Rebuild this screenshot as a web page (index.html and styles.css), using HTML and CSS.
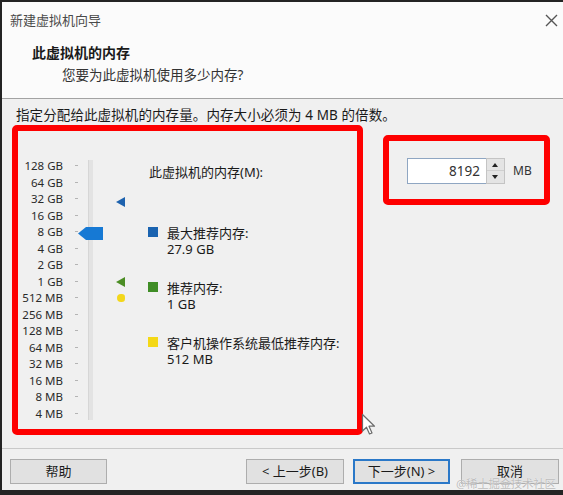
FILE: index.html
```html
<!DOCTYPE html>
<html lang="zh-CN">

<head>
    <meta charset="UTF-8">
    <meta name="viewport" content="width=device-width, initial-scale=1.0">
    <title>新建虚拟机向导</title>
    <link rel="stylesheet" href="styles.css">
</head>

<body>
    <div class="window">
        <div class="titlebar">
            <span class="title">新建虚拟机向导</span>
            <svg class="close" width="13" height="13" viewBox="0 0 13 13">
                <path d="M1 1L12 12M12 1L1 12" stroke="#555" stroke-width="1.4" fill="none" />
            </svg>
        </div>
        <div class="header">
            <h1>此虚拟机的内存</h1>
            <p>您要为此虚拟机使用多少内存?</p>
        </div>
        <div class="content">
            <p class="hint">指定分配给此虚拟机的内存量。内存大小必须为 4 MB 的倍数。</p>
            <div class="panels">
                <div class="highlight scaleBox">
                    <div class="scale">
                        <div class="rows">
                            <div class="row"><span>128 GB</span><i></i></div>
                            <div class="row"><span>64 GB</span><i></i></div>
                            <div class="row"><span>32 GB</span><i></i></div>
                            <div class="row"><span>16 GB</span><i></i></div>
                            <div class="row"><span>8 GB</span><i></i></div>
                            <div class="row"><span>4 GB</span><i></i></div>
                            <div class="row"><span>2 GB</span><i></i></div>
                            <div class="row"><span>1 GB</span><i></i></div>
                            <div class="row"><span>512 MB</span><i></i></div>
                            <div class="row"><span>256 MB</span><i></i></div>
                            <div class="row"><span>128 MB</span><i></i></div>
                            <div class="row"><span>64 MB</span><i></i></div>
                            <div class="row"><span>32 MB</span><i></i></div>
                            <div class="row"><span>16 MB</span><i></i></div>
                            <div class="row"><span>8 MB</span><i></i></div>
                            <div class="row"><span>4 MB</span><i></i></div>
                        </div>
                        <div class="track">
                            <div class="thumb" style="top: 67px"></div>
                        </div>
                        <div class="marks">
                            <span class="mark maxMark" style="top: 39px"></span>
                            <span class="mark recMark" style="top: 119px"></span>
                            <span class="mark minMark" style="top: 136px"></span>
                        </div>
                    </div>
                    <div class="legend">
                        <div class="legendTitle">此虚拟机的内存(M):</div>
                        <div class="legendItem">
                            <span class="swatch maxSwatch"></span>
                            <div>最大推荐内存:<br>27.9 GB</div>
                        </div>
                        <div class="legendItem">
                            <span class="swatch recSwatch"></span>
                            <div>推荐内存:<br>1 GB</div>
                        </div>
                        <div class="legendItem">
                            <span class="swatch minSwatch"></span>
                            <div>客户机操作系统最低推荐内存:<br>512 MB</div>
                        </div>
                    </div>
                </div>
                <div class="highlight inputBox">
                    <div class="spin">
                        <input type="text" value="8192">
                        <div class="spinButtons">
                            <button class="up"></button>
                            <button class="down"></button>
                        </div>
                    </div>
                    <span class="unit">MB</span>
                </div>
            </div>
        </div>
        <div class="footer">
            <button class="btn">帮助</button>
            <span class="spacer"></span>
            <button class="btn back">&lt; 上一步(B)</button>
            <button class="btn primary">下一步(N) &gt;</button>
            <button class="btn cancel">取消</button>
        </div>
    </div>
    <svg class="cursor" width="16" height="24" viewBox="0 0 16 24">
        <path d="M1.5 1.5L1.5 18L5.5 14.2L8.5 21L11 20L8 13.2L13.5 13.2Z" fill="#fff" stroke="#6b6b6b"
            stroke-width="1.2" stroke-linejoin="round" />
    </svg>
    <div class="watermark">@稀土掘金技术社区</div>
</body>

</html>
```

FILE: styles.css
```css
:root {
    --frame: #242424;
    --white: #fbfbfb;
    --panel: #f0f0f0;
    --text: #1a1a1a;
    --red: #fe0000;
    --font: "Noto Sans", "Noto Sans CJK SC", sans-serif;
}

html,
body {
    margin: 0;
    height: 100%;
}

body {
    background-color: var(--frame);
    font-family: var(--font);
    color: var(--text);
    font-size: 13px;
    overflow: hidden;
}

.window {
    margin: 2px 0 0 2px;
    height: 488px;
    background-color: var(--panel);
    display: flex;
    flex-direction: column;
}

.titlebar {
    height: 35px;
    flex: none;
    background-color: var(--white);
    display: flex;
    align-items: center;
    justify-content: space-between;
    padding: 0 5px 0 8px;
}

.title {
    color: #4a4a4a;
    font-size: 13px;
}

.close {
    margin-top: 1px;
}

.header {
    height: 62px;
    flex: none;
    box-sizing: border-box;
    background-color: var(--white);
    border-bottom: 1px solid #a3a3a3;
    padding: 7px 0 0 30px;
}

.header h1 {
    margin: 0;
    font-size: 14px;
    line-height: 18px;
    font-weight: bold;
}

.header p {
    margin: 4px 0 0 30px;
    font-size: 13.5px;
    line-height: 18px;
    color: #333;
}

.content {
    height: 349px;
    flex: none;
    box-sizing: border-box;
    padding: 7px 0 0 10px;
}

.hint {
    margin: 0;
    padding-left: 4px;
    font-size: 13.5px;
    line-height: 18px;
    letter-spacing: 0.1px;
}

.panels {
    display: flex;
    align-items: flex-start;
    margin-top: 1px;
}

.highlight {
    box-sizing: border-box;
    border: 6px solid var(--red);
    border-radius: 5px;
}

.scaleBox {
    width: 351px;
    height: 310px;
    display: flex;
    align-items: flex-start;
}

.scale {
    display: flex;
    padding-top: 26.5px;
}

.row {
    height: 16.5px;
    display: flex;
    align-items: center;
    font-size: 11.5px;
    color: #2a2a2a;
}

.row span {
    width: 45px;
    text-align: right;
}

.row i {
    width: 3px;
    height: 1px;
    margin-left: 12px;
    background-color: #b4b4b4;
}

.track {
    position: relative;
    margin: 2.5px 0 0 10px;
    width: 4px;
    height: 260px;
    background-color: #e3e3e3;
    border-left: 1px solid #d6d6d6;
}

.thumb {
    position: absolute;
    left: -11px;
    width: 25px;
    height: 13px;
    background-color: #1679d4;
    clip-path: polygon(0 50%, 8px 0, 100% 0, 100% 100%, 8px 100%);
}

.marks {
    position: relative;
    margin-left: 23px;
    width: 10px;
}

.mark {
    position: absolute;
    left: 0;
    width: 0;
    height: 0;
    border-top: 5px solid transparent;
    border-bottom: 5px solid transparent;
}

.maxMark {
    border-right: 9px solid #1d62ae;
}

.recMark {
    border-right: 9px solid #4b8d24;
}

.minMark {
    left: 1px;
    width: 8px;
    height: 8px;
    border: none;
    border-radius: 50% 40% 40% 50%;
    background-color: #f3d71b;
}

.legend {
    margin: 32.5px 0 0 22px;
    line-height: 16.5px;
    font-size: 13px;
}

.legendTitle {
    padding-left: 1px;
    margin-bottom: 44.5px;
}

.legendItem {
    display: flex;
    align-items: flex-start;
    gap: 9px;
    margin-bottom: 22px;
}

.swatch {
    width: 10px;
    height: 10px;
    margin-top: 2.5px;
    flex: none;
}

.maxSwatch {
    background-color: #1a63b0;
}

.recSwatch {
    background-color: #3f8d26;
}

.minSwatch {
    background-color: #f4d816;
}

.inputBox {
    width: 167px;
    height: 70px;
    margin: 10px 0 0 20px;
    display: flex;
    align-items: center;
    padding: 1px 0 0 18px;
}

.spin {
    display: flex;
    height: 26px;
}

.spin input {
    width: 79px;
    height: 26px;
    box-sizing: border-box;
    border: 1px solid #8fa6c2;
    border-right: none;
    background-color: #fff;
    text-align: right;
    padding: 0 6px 0 0;
    font-family: var(--font);
    font-size: 13.5px;
    color: #333;
    outline: none;
}

.spinButtons {
    width: 19px;
    display: flex;
    flex-direction: column;
    border: 1px solid #c4c4c4;
    box-sizing: border-box;
    background-color: #e4e4e4;
}

.spinButtons button {
    flex: 1;
    padding: 0;
    border: none;
    background-color: transparent;
    position: relative;
}

.spinButtons button + button {
    border-top: 1px solid #cfcfcf;
}

.spinButtons button::before {
    content: "";
    position: absolute;
    left: 5px;
    top: 4px;
    border-left: 3.5px solid transparent;
    border-right: 3.5px solid transparent;
}

.up::before {
    border-bottom: 4px solid #222;
}

.down::before {
    border-top: 4px solid #222;
}

.unit {
    margin-left: 8px;
    font-size: 12px;
    color: #333;
}

.footer {
    flex: 1;
    border-top: 1px solid #c9c9c9;
    display: flex;
    align-items: flex-start;
    padding: 10px 4px 0 8px;
}

.spacer {
    flex: 1;
}

.btn {
    width: 97px;
    height: 25px;
    box-sizing: border-box;
    background-color: #e1e1e1;
    border: 1px solid #adadad;
    font-family: var(--font);
    font-size: 13px;
    line-height: 14px;
    color: var(--text);
    padding: 0 0 2px;
}

.back {
    width: 98px;
}

.primary {
    margin-left: 9px;
    border-color: #2a78c8;
    box-shadow: inset 0 0 0 1px #2a78c8;
}

.cancel {
    width: 98px;
    margin-left: 11px;
}

.cursor {
    position: absolute;
    left: 361px;
    top: 413px;
}

.watermark {
    position: absolute;
    left: 456px;
    top: 478px;
    font-size: 11.5px;
    line-height: 12px;
    color: #bcbcbc;
    text-shadow: 0 0 1px #fff;
    letter-spacing: -0.3px;
}
```
